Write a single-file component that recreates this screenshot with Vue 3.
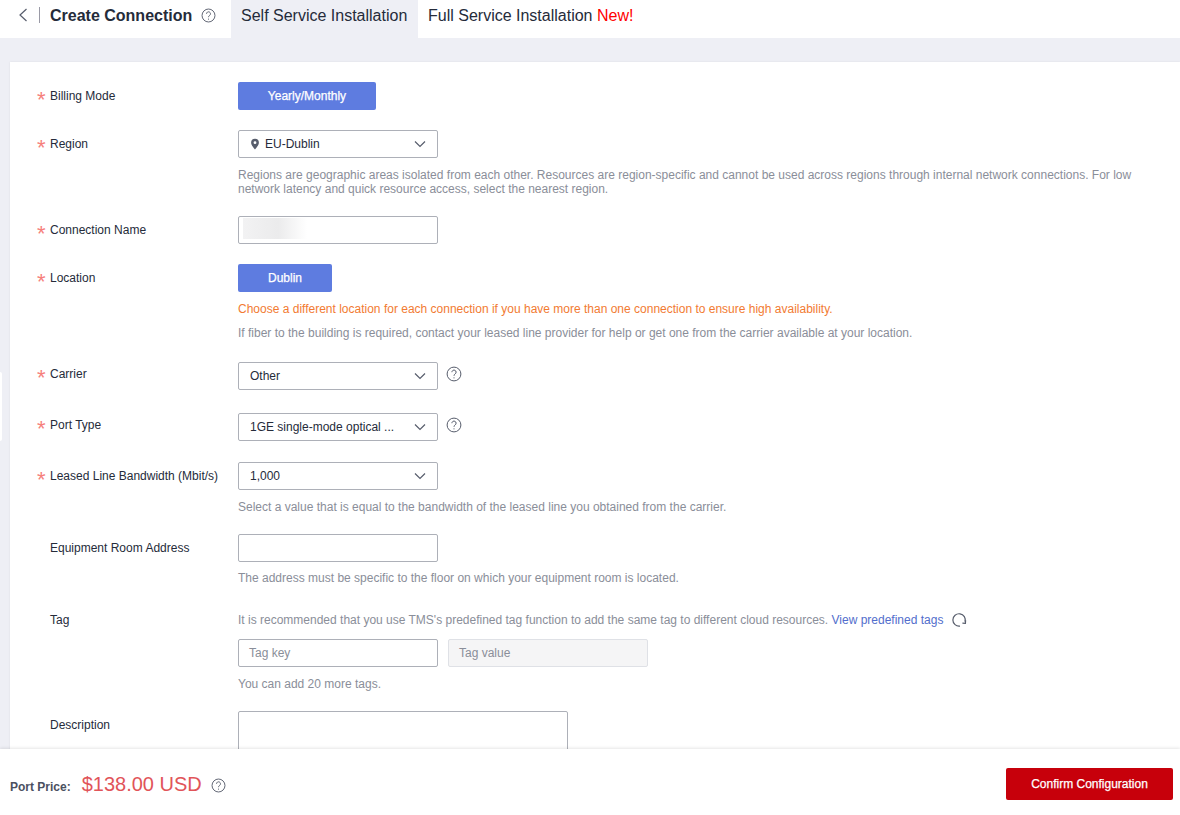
<script setup>
const helpCircle = 'M8 1.1a6.9 6.9 0 1 0 0 13.8A6.9 6.9 0 0 0 8 1.1z'
const helpHook = 'M5.9 6.2a2.1 2.1 0 1 1 3.3 1.7C8.4 8.5 8 8.9 8 9.8'
const chevron = 'M1 1.5 6 6.5l5-5'
</script>

<template>
  <div class="page">
    <header class="topbar">
      <div class="heading">
        <svg class="back" viewBox="0 0 10 14" width="10" height="14"><path d="M8.5 1 2 7l6.5 6" /></svg>
        <span class="divider"></span>
        <h1 class="title">Create Connection</h1>
        <svg class="help title-help" viewBox="0 0 16 16" width="15" height="15">
          <path :d="helpCircle" /><path :d="helpHook" /><circle cx="8" cy="11.8" r=".6" />
        </svg>
      </div>
      <div class="tab active">Self Service Installation</div>
      <div class="tab">Full Service Installation <span class="new">New!</span></div>
    </header>

    <main class="card">
      <div class="row">
        <label class="label req">Billing Mode</label>
        <div class="field"><button class="pill pill-wide">Yearly/Monthly</button></div>
      </div>

      <div class="row row-region">
        <label class="label req">Region</label>
        <div class="field">
          <div class="select">
            <svg class="pin" viewBox="0 0 10 12" width="10" height="12"><path fill-rule="evenodd" d="M5 .8a3.9 3.9 0 0 0-3.9 3.9C1.1 7.3 5 11.4 5 11.4s3.9-4.1 3.9-6.7A3.9 3.9 0 0 0 5 .8zm0 2.5a1.4 1.4 0 1 1 0 2.8 1.4 1.4 0 0 1 0-2.800z" /></svg>
            <span class="value">EU-Dublin</span>
            <svg class="chev" viewBox="0 0 12 8" width="12" height="8"><path :d="chevron" /></svg>
          </div>
          <p class="hint region-hint">Regions are geographic areas isolated from each other. Resources are region-specific and cannot be used across regions through internal network connections. For low network latency and quick resource access, select the nearest region.</p>
        </div>
      </div>

      <div class="row row-name">
        <label class="label req">Connection Name</label>
        <div class="field">
          <div class="input input-name"><span class="smudge"></span></div>
        </div>
      </div>

      <div class="row row-location">
        <label class="label req">Location</label>
        <div class="field">
          <button class="pill pill-narrow">Dublin</button>
          <p class="warn">Choose a different location for each connection if you have more than one connection to ensure high availability.</p>
          <p class="hint loc-hint">If fiber to the building is required, contact your leased line provider for help or get one from the carrier available at your location.</p>
        </div>
      </div>

      <div class="row row-carrier">
        <label class="label req up">Carrier</label>
        <div class="field inline">
          <div class="select"><span class="value">Other</span>
            <svg class="chev" viewBox="0 0 12 8" width="12" height="8"><path :d="chevron" /></svg>
          </div>
          <svg class="help field-help" viewBox="0 0 16 16" width="16" height="16">
            <path :d="helpCircle" /><path :d="helpHook" /><circle cx="8" cy="11.8" r=".6" />
          </svg>
        </div>
      </div>

      <div class="row row-port">
        <label class="label req up">Port Type</label>
        <div class="field inline">
          <div class="select"><span class="value">1GE single-mode optical ...</span>
            <svg class="chev" viewBox="0 0 12 8" width="12" height="8"><path :d="chevron" /></svg>
          </div>
          <svg class="help field-help" viewBox="0 0 16 16" width="16" height="16">
            <path :d="helpCircle" /><path :d="helpHook" /><circle cx="8" cy="11.8" r=".6" />
          </svg>
        </div>
      </div>

      <div class="row row-band">
        <label class="label req">Leased Line Bandwidth (Mbit/s)</label>
        <div class="field">
          <div class="select"><span class="value">1,000</span>
            <svg class="chev" viewBox="0 0 12 8" width="12" height="8"><path :d="chevron" /></svg>
          </div>
          <p class="hint band-hint">Select a value that is equal to the bandwidth of the leased line you obtained from the carrier.</p>
        </div>
      </div>

      <div class="row row-room">
        <label class="label">Equipment Room Address</label>
        <div class="field">
          <div class="input"></div>
          <p class="hint one-hint">The address must be specific to the floor on which your equipment room is located.</p>
        </div>
      </div>

      <div class="row row-tag">
        <label class="label tag-label">Tag</label>
        <div class="field">
          <p class="hint tag-note">It is recommended that you use TMS's predefined tag function to add the same tag to different cloud resources. <a class="link">View predefined tags</a>
            <svg class="refresh" viewBox="0 0 16 16" width="16" height="16"><path d="M9 14.100A6.200 6.200 0 1 1 14 9.800" /><path d="M14.600 8.200 14.400 11.400 11.400 11.200" /></svg>
          </p>
          <div class="tag-inputs">
            <div class="input ph">Tag key</div>
            <div class="input ph disabled">Tag value</div>
          </div>
          <p class="hint tags-left">You can add 20 more tags.</p>
        </div>
      </div>

      <div class="row row-desc">
        <label class="label">Description</label>
        <div class="field"><div class="textarea"></div></div>
      </div>
    </main>

    <span class="side-handle"></span>

    <footer class="footer">
      <div class="price">
        <span class="price-label">Port Price:</span>
        <span class="price-value">$138.00 USD</span>
        <svg class="help price-help" viewBox="0 0 16 16" width="15" height="15">
          <path :d="helpCircle" /><path :d="helpHook" /><circle cx="8" cy="11.8" r=".6" />
        </svg>
      </div>
      <button class="confirm">Confirm Configuration</button>
    </footer>
  </div>
</template>

<style>
html, body { margin: 0; background: #eeeff5; }
</style>

<style scoped>
.page {
  position: relative;
  height: 815px;
  overflow: hidden;
  background: #eeeff5;
  font-family: "Liberation Sans", Arial, sans-serif;
  font-size: 12px;
  color: #252b3a;
}
.topbar { display: flex; height: 38px; background: #fff; }
.heading { display: flex; align-items: center; width: 231px; padding: 0 0 8px 18px; box-sizing: border-box; }
.back { fill: none; stroke: #575d6c; stroke-width: 1.2; }
.divider { width: 1px; height: 16px; background: #9a9aa6; margin: 0 10px 0 11px; }
.title { margin: 2px 0 0; font-size: 16px; font-weight: 700; line-height: 22px; }
.help { fill: none; stroke: #575d6c; stroke-width: 1; flex: none; }
.help circle { fill: #575d6c; stroke: none; }
.title-help { margin-left: 9px; }
.tab { height: 38px; padding: 0 10px; font-size: 16px; line-height: 31px; color: #252b3a; }
.tab.active { width: 167px; background: #eeeff5; white-space: nowrap; }
.new { color: #f00; }

.card {
  margin: 24px 0 0 10px;
  background: #fff;
  box-shadow: 0 0 2px rgba(0, 0, 0, 0.08);
  padding-top: 20px;
  height: 760px;
}
.row { display: grid; grid-template-columns: 228px 1fr; }
.label { position: relative; padding-left: 40px; line-height: 28px; white-space: nowrap; }
.label.up { line-height: 24px; }
.label.req::before {
  content: "*";
  position: absolute;
  left: 27px;
  top: 4px;
  color: #f6807c;
  font-size: 22px;
  font-weight: 400;
  line-height: 28px;
}
.label.up::before { top: 2px; }
.tag-label { line-height: 16px; }
.field { min-width: 0; }
.inline { display: flex; align-items: flex-start; }
.row-region, .row-name, .row-location, .row-room, .row-desc { margin-top: 20px; }
.row-carrier { margin-top: 22px; }
.row-port { margin-top: 23px; }
.row-band { margin-top: 21px; }
.row-tag { margin-top: 27px; }

.pill {
  display: block;
  height: 28px;
  border: 0;
  border-radius: 2px;
  background: #5e7ce0;
  color: #fff;
  font: 400 12px "Liberation Sans", Arial, sans-serif;
  -webkit-text-stroke: 0.25px #fff;
  padding: 0;
}
.pill-wide { width: 138px; }
.pill-narrow { width: 94px; }

.select, .input {
  width: 200px;
  height: 28px;
  box-sizing: border-box;
  border: 1px solid #adb0b8;
  border-radius: 2px;
  background: #fff;
}
.select { display: flex; align-items: center; padding: 0 11px; }
.value { flex: 1; white-space: nowrap; line-height: 26px; }
.pin { fill: #575d6c; margin-right: 5px; flex: none; }
.chev { fill: none; stroke: #575d6c; stroke-width: 1.2; flex: none; }
.input-name { position: relative; }
.smudge {
  position: absolute;
  left: 4px;
  top: 1px;
  width: 64px;
  height: 21px;
  background: linear-gradient(90deg, #f2f2f3 0%, #ebebec 55%, rgba(240, 240, 241, 0) 100%);
}
.field-help { margin: 4px 0 0 8px; }

.hint { margin: 0; color: #8a8e99; line-height: 14px; }
.region-hint { margin-top: 10px; max-width: 900px; }
.band-hint { margin-top: 10px; }
.one-hint { margin-top: 9px; }
.warn { margin: 10px 0 0; color: #f27b32; line-height: 14px; }
.loc-hint { margin-top: 10px; }
.tag-note { display: flex; align-items: center; line-height: 16px; white-space: pre-wrap; }
.link { color: #526ecc; }
.refresh { fill: none; stroke: #575d6c; stroke-width: 1.2; margin-left: 8px; }
.tag-inputs { display: flex; gap: 10px; margin-top: 11px; }
.tags-left { margin-top: 10px; }
.ph { padding: 0 10px; line-height: 26px; color: #8a8e99; }
.disabled { background: #f5f5f6; border-color: #dfe1e6; }
.textarea { width: 330px; height: 90px; box-sizing: border-box; border: 1px solid #adb0b8; border-radius: 2px; }

.side-handle {
  position: absolute;
  left: 0;
  top: 372px;
  width: 2px;
  height: 69px;
  background: #fff;
  border-radius: 0 3px 3px 0;
}

.footer {
  position: absolute;
  left: 0;
  right: 0;
  bottom: 0;
  height: 66px;
  display: flex;
  align-items: flex-start;
  justify-content: space-between;
  background: #fff;
  box-shadow: 0 -1px 3px rgba(0, 0, 0, 0.1);
}
.price { display: flex; align-items: center; margin: 22px 0 0 10px; height: 28px; }
.price-label { margin-top: 4px; font-weight: 700; color: #4b5060; }
.price-value { margin: -2px 0 0 11px; font-size: 20px; color: #e15459; }
.price-help { margin-left: 9px; }
.confirm {
  width: 167px;
  height: 32px;
  margin: 19px 7px 0 0;
  border: 0;
  border-radius: 2px;
  background: #c7000b;
  color: #fff;
  font: 400 12px "Liberation Sans", Arial, sans-serif;
  -webkit-text-stroke: 0.25px #fff;
}
</style>
